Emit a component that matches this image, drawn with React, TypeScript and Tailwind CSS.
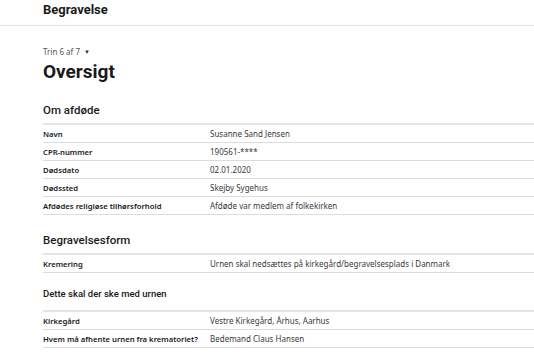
const font = { fontFamily: '"Noto Sans", "Open Sans", sans-serif' };
const bold = { fontFamily: 'Roboto, "Noto Sans", sans-serif' };

type Row = { label: string; value: string };

const afdode: Row[] = [
  { label: "Navn", value: "Susanne Sand Jensen" },
  { label: "CPR-nummer", value: "190561-****" },
  { label: "Dødsdato", value: "02.01.2020" },
  { label: "Dødssted", value: "Skejby Sygehus" },
  { label: "Afdødes religiøse tilhørsforhold", value: "Afdøde var medlem af folkekirken" },
];

const form: Row[] = [
  { label: "Kremering", value: "Urnen skal nedsættes på kirkegård/begravelsesplads i Danmark" },
];

const urne: Row[] = [
  { label: "Kirkegård", value: "Vestre Kirkegård, Århus, Aarhus" },
  { label: "Hvem må afhente urnen fra krematoriet?", value: "Bedemand Claus Hansen" },
];

function Table({ rows }: { rows: Row[] }) {
  return (
    <div className="border-t-2 border-[#e4e4e4]">
      {rows.map((r) => (
        <div key={r.label} className="flex h-[18px] items-center border-b border-[#dcdcdc] leading-[10px]">
          <div className="w-[167px] text-[7.7px] font-semibold text-[#1a1a1a]">{r.label}</div>
          <div className="text-[8px] text-[#3a3a3a]">{r.value}</div>
        </div>
      ))}
    </div>
  );
}

export default function App() {
  return (
    <div className="min-h-screen overflow-hidden bg-white text-[#1a1a1a]" style={font}>
      {/* Header */}
      <div className="h-[26px] border-b border-[#e0e0e0] pl-[43px] pt-[1px]">
        <div className="text-[13px] font-bold leading-[18px]" style={bold}>
          Begravelse
        </div>
      </div>

      <div className="pl-[43px]">
        {/* Step */}
        <div className="mt-[20px] flex items-center gap-[4px] text-[8px] leading-[12px] text-[#555]">
          <span>Trin 6 af 7</span>
          <span className="text-[6px] text-[#333]">▼</span>
        </div>

        {/* Title */}
        <h1 className="mt-[2px] text-[19px] font-bold leading-[24px]" style={bold}>
          Oversigt
        </h1>

        {/* Om afdøde */}
        <h2 className="mt-[17px] text-[11.5px] font-medium leading-[18px]" style={bold}>
          Om afdøde
        </h2>
        <div className="mt-[4px]">
          <Table rows={afdode} />
        </div>

        {/* Begravelsesform */}
        <h2 className="mt-[16px] text-[11.5px] font-medium leading-[18px]" style={bold}>
          Begravelsesform
        </h2>
        <div className="mt-[4px]">
          <Table rows={form} />
        </div>

        {/* Urnen */}
        <h3 className="mt-[14px] text-[9.5px] font-medium leading-[14px]" style={bold}>
          Dette skal der ske med urnen
        </h3>
        <div className="mt-[9px]">
          <Table rows={urne} />
        </div>
      </div>
    </div>
  );
}
